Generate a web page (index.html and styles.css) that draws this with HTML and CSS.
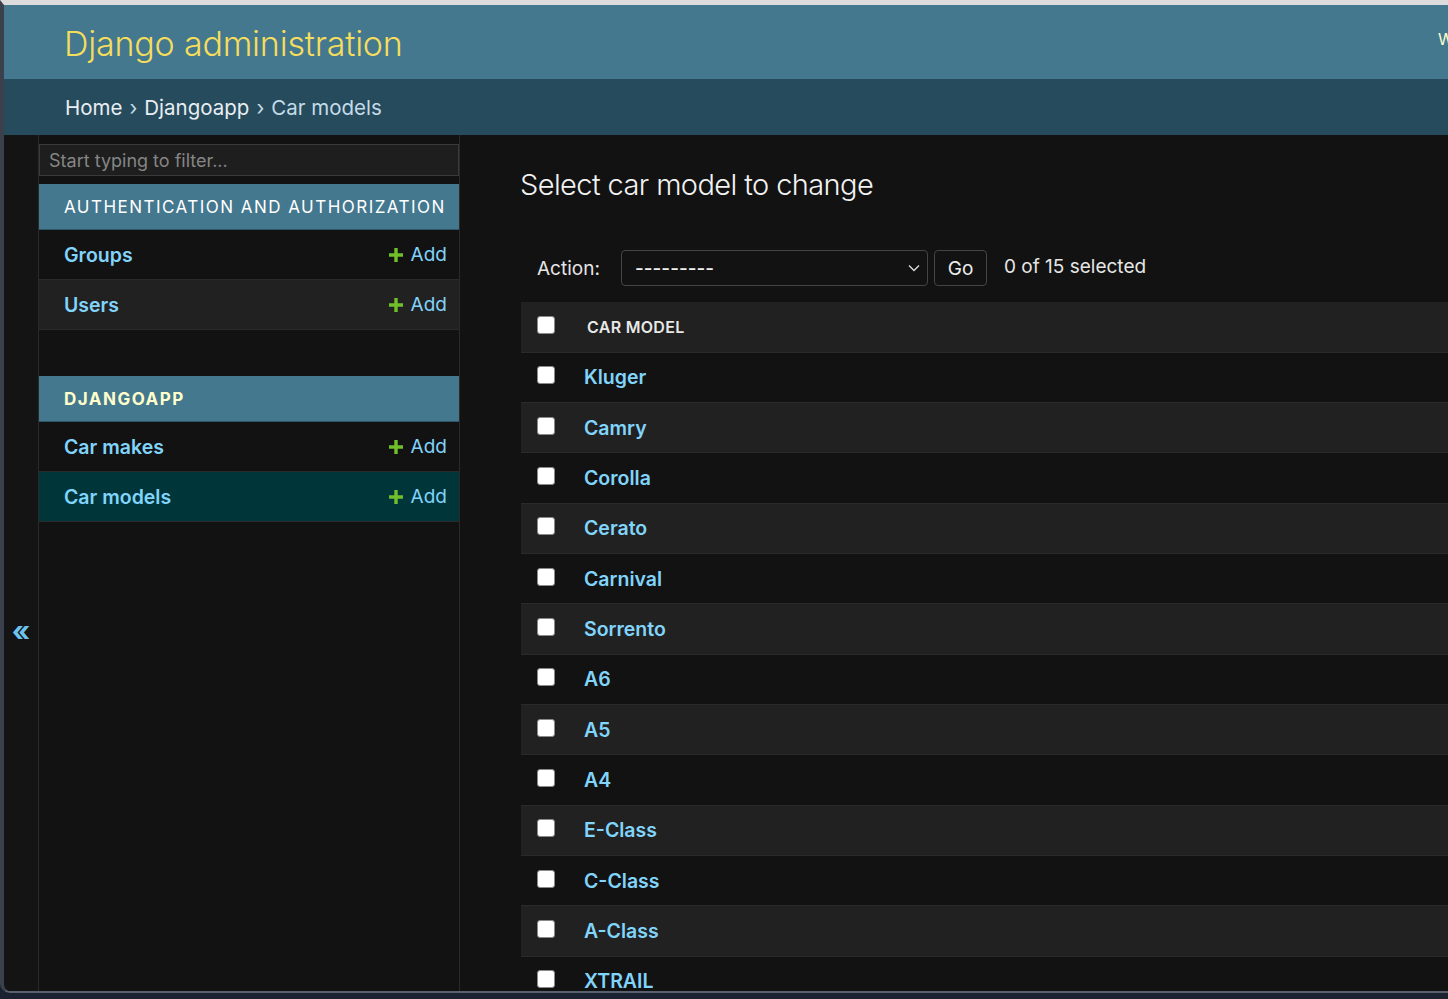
FILE: index.html
```html
<!DOCTYPE html>
<html lang="en">
<head>
<meta charset="utf-8">
<title>Select car model to change | Django site admin</title>
<link rel="stylesheet" href="styles.css">
</head>
<body>
<div class="window">
  <header class="header">
    <div class="branding">Django administration</div>
    <div class="user-tools">WELCOME, <strong>ADMIN</strong>. VIEW SITE / CHANGE PASSWORD / LOG OUT</div>
  </header>
  <nav class="breadcrumbs">
    <a href="#">Home</a> › <a href="#">Djangoapp</a> › <span class="crumb-current">Car models</span>
  </nav>
  <div class="main">
    <div class="toggle"><span class="toggle-glyph">«</span></div>
    <aside class="sidebar">
      <input class="nav-filter" type="search" placeholder="Start typing to filter...">
      <div class="module">
        <div class="caption">Authentication and Authorization</div>
        <div class="nav-row"><a class="model" href="#">Groups</a><a class="addlink" href="#"><svg class="plus" viewBox="0 0 16 16"><path d="M6.3 1h3.4v5.3H15v3.4H9.7V15H6.3V9.7H1V6.3h5.3z" fill="#70bf2b"/></svg>Add</a></div>
        <div class="nav-row alt"><a class="model" href="#">Users</a><a class="addlink" href="#"><svg class="plus" viewBox="0 0 16 16"><path d="M6.3 1h3.4v5.3H15v3.4H9.7V15H6.3V9.7H1V6.3h5.3z" fill="#70bf2b"/></svg>Add</a></div>
      </div>
      <div class="module">
        <div class="caption current">Djangoapp</div>
        <div class="nav-row"><a class="model" href="#">Car makes</a><a class="addlink" href="#"><svg class="plus" viewBox="0 0 16 16"><path d="M6.3 1h3.4v5.3H15v3.4H9.7V15H6.3V9.7H1V6.3h5.3z" fill="#70bf2b"/></svg>Add</a></div>
        <div class="nav-row selected"><a class="model" href="#">Car models</a><a class="addlink" href="#"><svg class="plus" viewBox="0 0 16 16"><path d="M6.3 1h3.4v5.3H15v3.4H9.7V15H6.3V9.7H1V6.3h5.3z" fill="#70bf2b"/></svg>Add</a></div>
      </div>
    </aside>
    <section class="content">
      <h1 class="page-title">Select car model to change</h1>
      <div class="actions">
        <span class="action-label">Action:</span>
        <div class="select">
          <span>---------</span>
          <svg class="chevron" viewBox="0 0 12 8"><path d="M1 1.5l5 5 5-5" fill="none" stroke="#ddd" stroke-width="1.3"/></svg>
        </div>
        <button class="go">Go</button>
        <span class="counter">0 of 15 selected</span>
      </div>
      <table class="results">
        <thead>
          <tr><th class="check"><span class="cb"></span></th><th class="col-head">Car model</th></tr>
        </thead>
        <tbody>
          <tr><td class="check"><span class="cb"></span></td><td><a href="#">Kluger</a></td></tr>
          <tr class="alt"><td class="check"><span class="cb"></span></td><td><a href="#">Camry</a></td></tr>
          <tr><td class="check"><span class="cb"></span></td><td><a href="#">Corolla</a></td></tr>
          <tr class="alt"><td class="check"><span class="cb"></span></td><td><a href="#">Cerato</a></td></tr>
          <tr><td class="check"><span class="cb"></span></td><td><a href="#">Carnival</a></td></tr>
          <tr class="alt"><td class="check"><span class="cb"></span></td><td><a href="#">Sorrento</a></td></tr>
          <tr><td class="check"><span class="cb"></span></td><td><a href="#">A6</a></td></tr>
          <tr class="alt"><td class="check"><span class="cb"></span></td><td><a href="#">A5</a></td></tr>
          <tr><td class="check"><span class="cb"></span></td><td><a href="#">A4</a></td></tr>
          <tr class="alt"><td class="check"><span class="cb"></span></td><td><a href="#">E-Class</a></td></tr>
          <tr><td class="check"><span class="cb"></span></td><td><a href="#">C-Class</a></td></tr>
          <tr class="alt"><td class="check"><span class="cb"></span></td><td><a href="#">A-Class</a></td></tr>
          <tr><td class="check"><span class="cb"></span></td><td><a href="#">XTRAIL</a></td></tr>
          <tr class="alt"><td class="check"><span class="cb"></span></td><td><a href="#">Qashqai</a></td></tr>
          <tr><td class="check"><span class="cb"></span></td><td><a href="#">Patrol</a></td></tr>
        </tbody>
      </table>
    </section>
  </div>
</div>
</body>
</html>
```

FILE: styles.css
```css
* { box-sizing: border-box; }
html, body { margin: 0; padding: 0; }
body {
  background: #1a2130;
  font-family: Inter, "Noto Sans", "Liberation Sans", sans-serif;
  color: #eeeeee;
  width: 1448px;
  height: 999px;
  overflow: hidden;
}
a { text-decoration: none; }

.window {
  width: 1448px;
  height: 993px;
  border-top: 5px solid #dcdcdc;
  border-left: 4px solid #3b414c;
  border-bottom: 2px solid #5a616e;
  border-bottom-left-radius: 10px;
  background: #121212;
  overflow: hidden;
  display: flex;
  flex-direction: column;
}

.header {
  flex: 0 0 74px;
  background: #44788f;
  display: flex;
  align-items: center;
  padding-left: 60px;
  width: 2200px;
}
.branding {
  flex: 0 0 1374px;
  color: #f5dd5d;
  font-size: 34px;
  font-weight: 300;
  letter-spacing: -0.2px;
  margin-top: 2px;
}
.user-tools {
  color: #ffffcc;
  font-size: 16px;
  letter-spacing: 0.8px;
  white-space: nowrap;
  margin-top: -6px;
}
.user-tools strong { font-weight: 600; }

.breadcrumbs {
  flex: 0 0 56px;
  background: #264b5d;
  color: #c4dce8;
  padding-left: 61px;
  display: flex;
  align-items: center;
  gap: 7px;
  font-size: 20.5px;
  padding-top: 1px;
}
.breadcrumbs a { color: #e8eef2; }
.crumb-current { color: #c4dce8; }

.main {
  flex: 1;
  display: flex;
  min-height: 0;
}
.toggle {
  flex: 0 0 35px;
  border-right: 1px solid #2a2a2a;
  background: #141414;
  padding-top: 482px;
  text-align: center;
}
.toggle-glyph {
  color: #6ec3ec;
  font-size: 28px;
  font-weight: 700;
  line-height: 1;
}

.sidebar {
  flex: 0 0 421px;
  border-right: 1px solid #2a2a2a;
  padding-top: 9px;
}
.nav-filter {
  display: block;
  width: 420px;
  height: 32px;
  margin: 0 0 8px 0;
  background: #1e1e1e;
  border: 1px solid #3a3a3a;
  color: #eee;
  padding: 0 9px;
  font-family: inherit;
  font-size: 18px;
  outline: none;
}
.nav-filter::placeholder { color: #858585; }

.module { margin-bottom: 46px; }
.caption {
  height: 46px;
  background: #44788f;
  color: #ffffff;
  font-size: 17px;
  letter-spacing: 1.47px;
  text-transform: uppercase;
  padding-left: 25px;
  display: flex;
  align-items: center;
  border-bottom: 1px solid #2f5568;
}
.caption.current {
  color: #ffffcc;
  font-weight: 700;
}
.nav-row {
  height: 50px;
  display: flex;
  align-items: center;
  justify-content: space-between;
  padding: 0 12px 0 25px;
  border-bottom: 1px solid #2a2a2a;
  background: #121212;
}
.nav-row.alt { background: #212121; }
.nav-row.selected { background: #00363a; }
.model {
  color: #81d4fa;
  font-weight: 600;
  font-size: 19.5px;
}
.addlink {
  color: #81d4fa;
  font-size: 19px;
  display: flex;
  align-items: center;
  gap: 7px;
}
.plus { width: 16px; height: 16px; }

.content {
  flex: 1;
  padding: 31px 0 0 61px;
  min-width: 0;
}
.page-title {
  margin: 0 0 0 -1px;
  font-size: 29px;
  font-weight: 300;
  line-height: 38px;
  color: #f2f2f2;
  letter-spacing: -0.6px;
}
.actions {
  margin-top: 46px;
  height: 36px;
  display: flex;
  align-items: center;
  padding-left: 16px;
  font-size: 19px;
  color: #e6e6e6;
}
.action-label { width: 84px; }
.select {
  width: 307px;
  height: 36px;
  border: 1px solid #444;
  border-radius: 4px;
  background: #121212;
  display: flex;
  align-items: center;
  justify-content: space-between;
  padding: 0 7px 0 13px;
  color: #f0f0f0;
  font-weight: 500;
}
.chevron { width: 12px; height: 8px; }
.go {
  margin-left: 6px;
  width: 53px;
  height: 36px;
  border: 1px solid #444;
  border-radius: 4px;
  background: #121212;
  color: #eeeeee;
  font-family: inherit;
  font-size: 19px;
  padding: 0;
}
.counter { margin-left: 17px; margin-top: -3px; }

.results {
  margin-top: 16px;
  width: 100%;
  border-collapse: collapse;
}
.results th, .results td {
  height: 50.33px;
  padding: 0;
  text-align: left;
  vertical-align: middle;
  border-bottom: 1px solid #2a2a2a;
}
.results thead tr { background: #212121; }
.results tbody tr { background: #121212; }
.results tbody tr.alt { background: #212121; }
.results .check { width: 63px; padding-left: 16px; }
.cb {
  display: block;
  width: 18px;
  height: 18px;
  background: #ffffff;
  border: 1px solid #8a8a8a;
  border-radius: 3px;
  margin-top: -4px;
}
.col-head {
  font-size: 16px;
  font-weight: 600;
  text-transform: uppercase;
  color: #e8e8e8;
  padding-left: 3px !important;
  letter-spacing: 0.3px;
}
.results td a {
  color: #81d4fa;
  font-weight: 600;
  font-size: 19.5px;
}
```
